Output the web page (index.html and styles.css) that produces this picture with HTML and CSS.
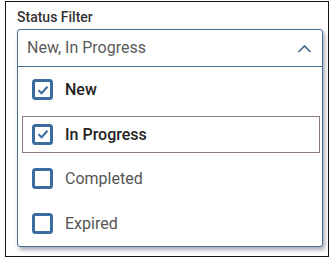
FILE: index.html
```html
<!DOCTYPE html>
<html>
<head>
<meta charset="utf-8">
<link rel="stylesheet" href="styles.css">
</head>
<body>
<div class="frame">
  <div class="label">Status Filter</div>
  <div class="select">
    <div class="select-head">
      <span class="value">New, In Progress</span>
      <svg class="chev" width="15" height="9" viewBox="0 0 15 9"><polyline points="1.5,8 7.5,2 13.5,8" fill="none" stroke="#44698f" stroke-width="1.7"/></svg>
    </div>
    <div class="options">
      <div class="option checked">
        <span class="box"><svg width="14" height="14" viewBox="0 0 14 14"><polyline points="2.5,7.2 5.6,10.2 11.5,3.8" fill="none" stroke="#3a6a9e" stroke-width="2"/></svg></span>
        <span class="text">New</span>
      </div>
      <div class="option checked focused">
        <span class="box"><svg width="14" height="14" viewBox="0 0 14 14"><polyline points="2.5,7.2 5.6,10.2 11.5,3.8" fill="none" stroke="#3a6a9e" stroke-width="2"/></svg></span>
        <span class="text">In Progress</span>
      </div>
      <div class="option">
        <span class="box"></span>
        <span class="text">Completed</span>
      </div>
      <div class="option">
        <span class="box"></span>
        <span class="text">Expired</span>
      </div>
    </div>
  </div>
</div>
</body>
</html>
```
FILE: styles.css
```css
* { box-sizing: border-box; }
html, body { margin: 0; padding: 0; background: #fff; }
body { font-family: Roboto, "Liberation Sans", sans-serif; }
.frame {
  margin: 1px 0 0 5px;
  width: 324px;
  height: 256px;
  border: 1px solid #111;
  padding: 7px 5px 0 11px;
}
.label {
  font-size: 14px;
  line-height: 17px;
  font-weight: 500;
  color: #333;
  margin-bottom: 3px;
}
.select {
  border: 1px solid #4a6d92;
  border-radius: 3px;
  box-shadow: 2px 3px 4px rgba(60, 70, 90, 0.45);
  background: #fff;
}
.select-head {
  height: 37px;
  border-bottom: 1px solid #4a6d92;
  display: flex;
  align-items: center;
  justify-content: space-between;
  padding: 0 10px 0 9px;
}
.value {
  font-size: 16px;
  line-height: 36px;
  color: #5a5a5a;
}
.chev { display: block; margin-top: 1px; }
.options {
  display: flex;
  flex-direction: column;
  gap: 7.5px;
  padding: 4px 2px 4px 4px;
}
.option {
  height: 37px;
  border: 1px solid transparent;
  display: flex;
  align-items: center;
  padding-left: 9px;
  gap: 12px;
}
.option.focused { border-color: #8a7885; }
.box {
  width: 21px;
  height: 21px;
  border: 3px solid #3b6c9f;
  border-radius: 3.5px;
  display: flex;
  align-items: center;
  justify-content: center;
  flex: none;
}
.box svg { display: block; }
.text {
  font-size: 16px;
  color: #555;
}
.option.checked .text { color: #222; font-weight: 500; }
```
